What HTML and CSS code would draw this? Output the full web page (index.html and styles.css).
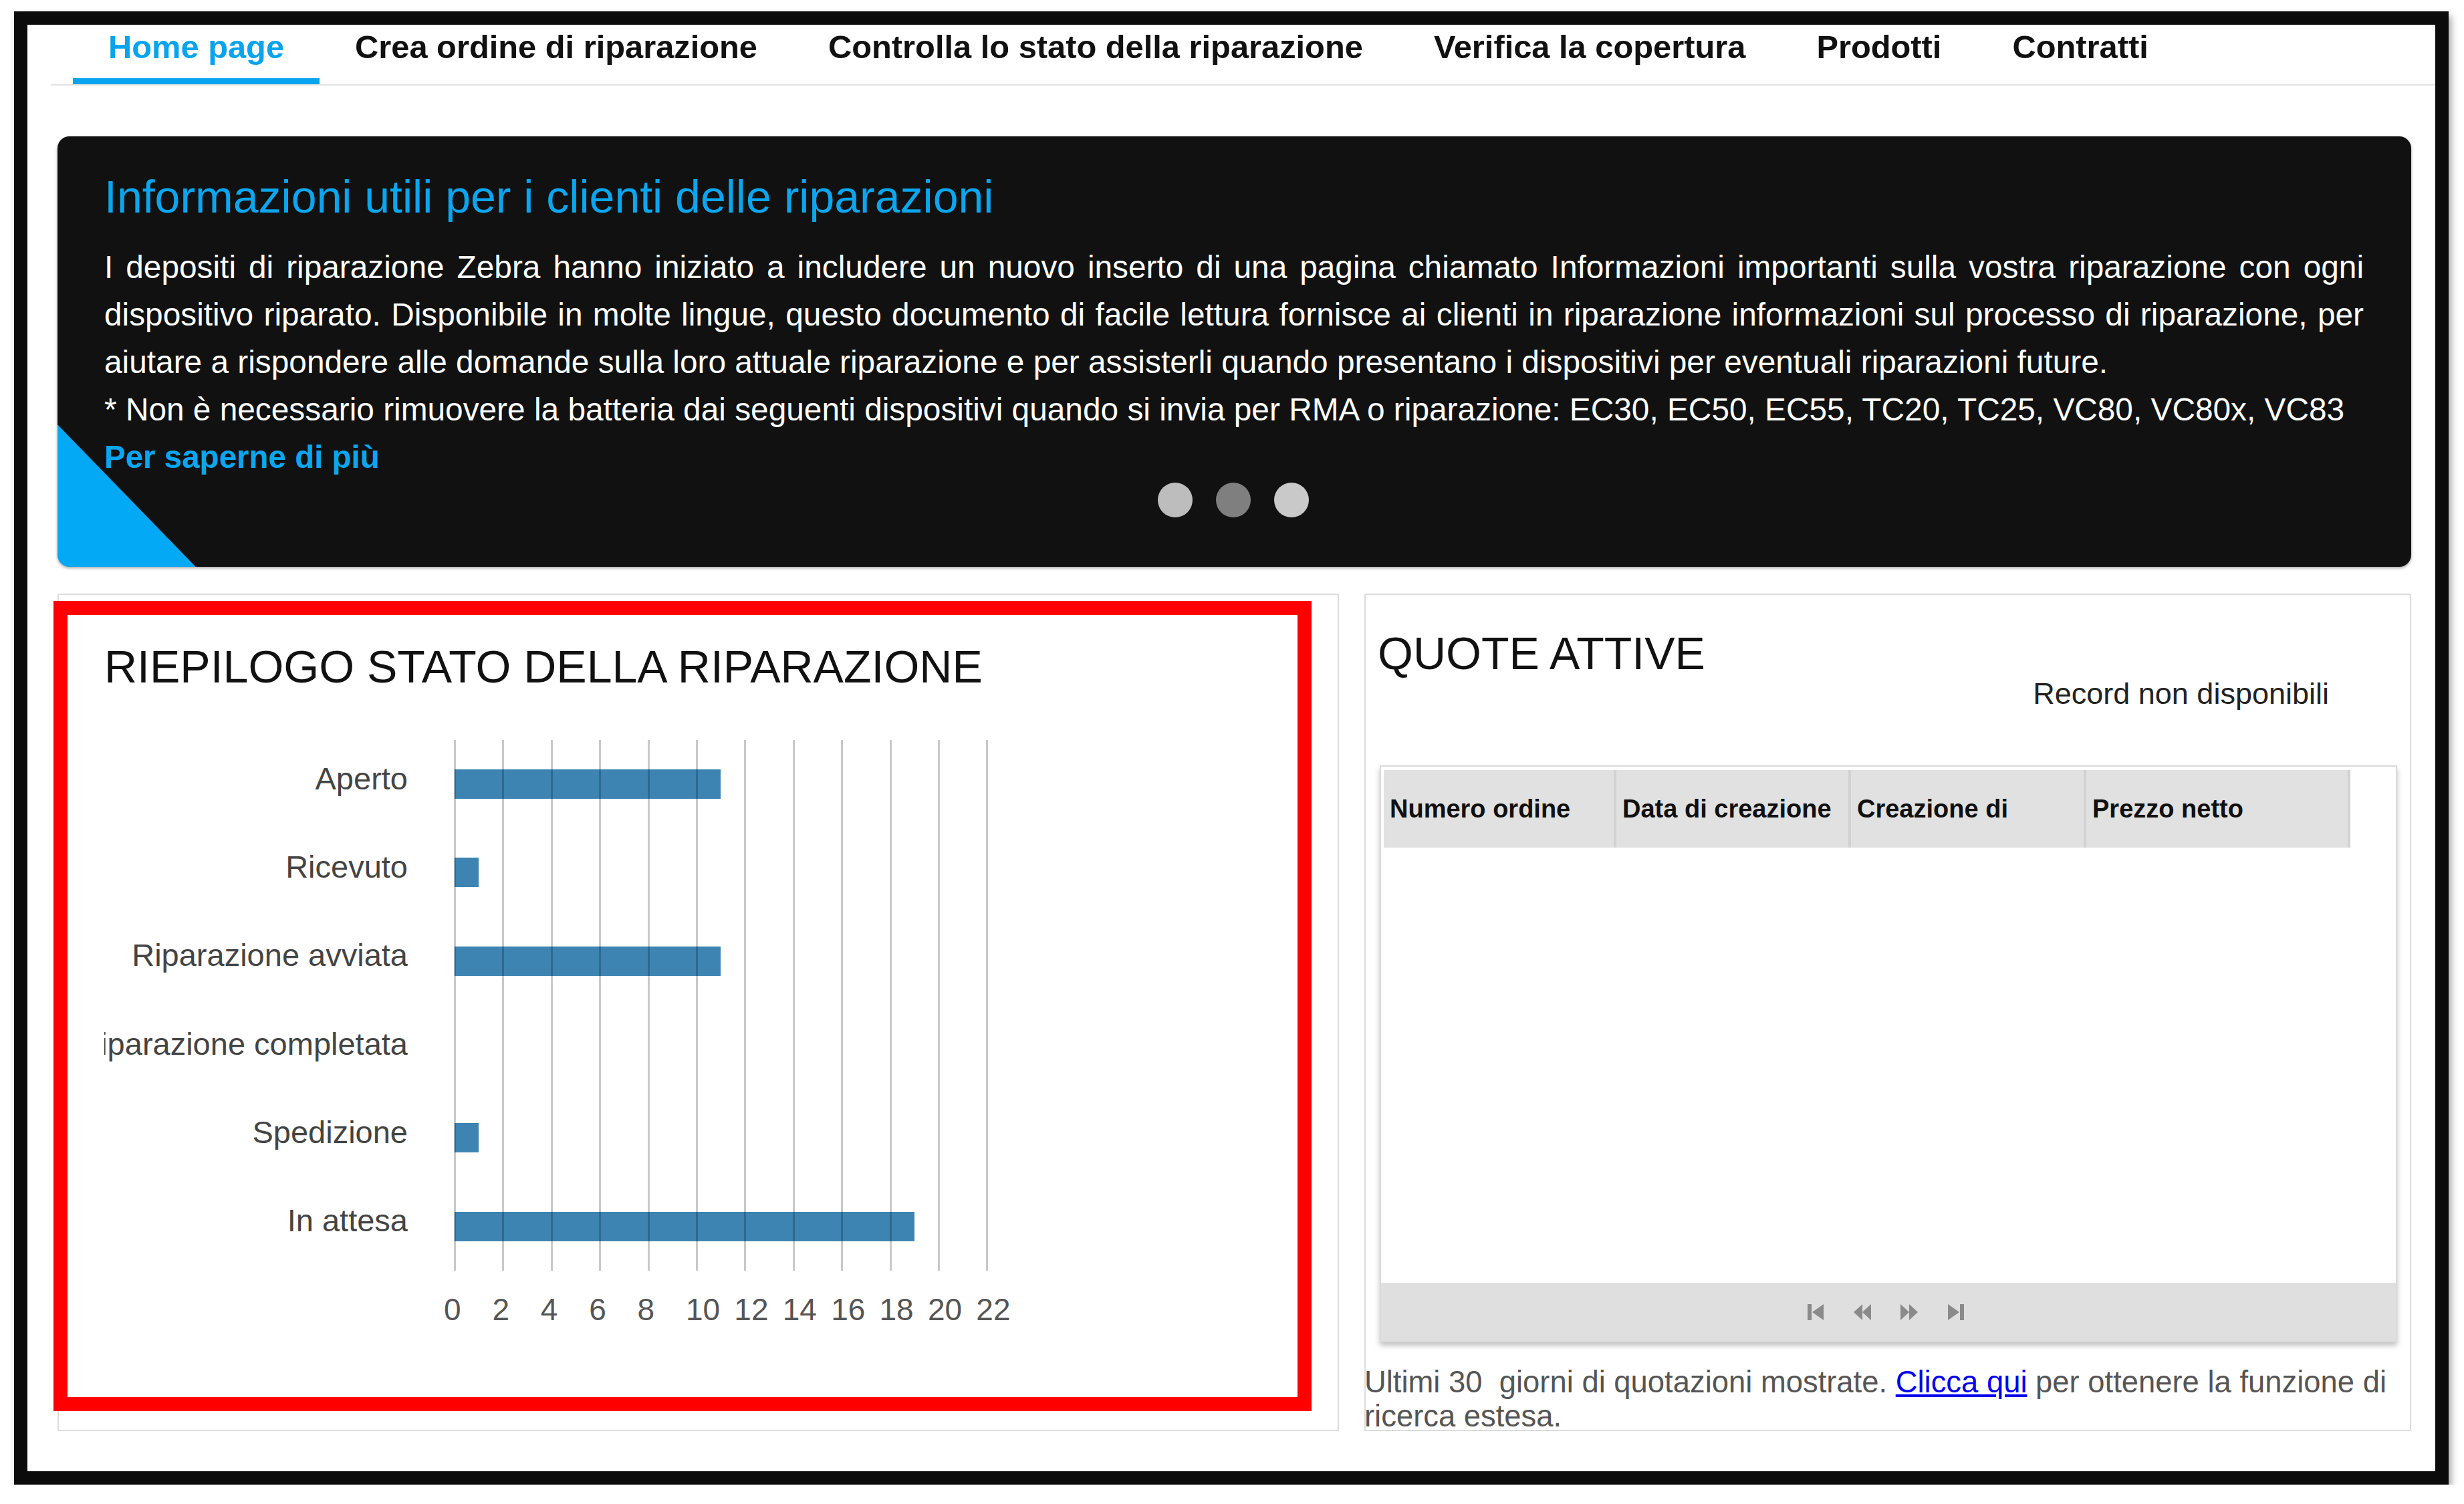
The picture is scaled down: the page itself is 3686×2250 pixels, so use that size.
FILE: index.html
```html
<!DOCTYPE html>
<html lang="it">
<head>
<meta charset="utf-8">
<title>Home page</title>
<link rel="stylesheet" href="styles.css">
</head>
<body>
<div class="frame">
  <nav class="tabs">
    <a class="tab active">Home page</a>
    <a class="tab">Crea ordine di riparazione</a>
    <a class="tab">Controlla lo stato della riparazione</a>
    <a class="tab">Verifica la copertura</a>
    <a class="tab">Prodotti</a>
    <a class="tab">Contratti</a>
  </nav>
  <main class="content">
    <section class="banner">
      <h1 class="banner-title">Informazioni utili per i clienti delle riparazioni</h1>
      <p class="banner-text justify">I depositi di riparazione Zebra hanno iniziato a includere un nuovo inserto di una pagina chiamato Informazioni importanti sulla vostra riparazione con ogni dispositivo riparato. Disponibile in molte lingue, questo documento di facile lettura fornisce ai clienti in riparazione informazioni sul processo di riparazione, per aiutare a rispondere alle domande sulla loro attuale riparazione e per assisterli quando presentano i dispositivi per eventuali riparazioni future.</p>
      <p class="banner-text">* Non è necessario rimuovere la batteria dai seguenti dispositivi quando si invia per RMA o riparazione: EC30, EC50, EC55, TC20, TC25, VC80, VC80x, VC83</p>
      <a class="banner-more">Per saperne di più</a>
      <div class="dots"><span class="dot d1"></span><span class="dot d2"></span><span class="dot d3"></span></div>
    </section>
    <div class="panels">
      <section class="panel summary">
        <h2 class="panel-title">RIEPILOGO STATO DELLA RIPARAZIONE</h2>
        <div class="chart">
          <div class="labels">
            <div class="label">Aperto</div>
            <div class="label">Ricevuto</div>
            <div class="label">Riparazione avviata</div>
            <div class="label">Riparazione completata</div>
            <div class="label">Spedizione</div>
            <div class="label">In attesa</div>
          </div>
          <div class="plot">
            <div class="row"><div class="bar" style="width:398.2px"></div></div>
            <div class="row"><div class="bar" style="width:36.2px"></div></div>
            <div class="row"><div class="bar" style="width:398.2px"></div></div>
            <div class="row"></div>
            <div class="row"><div class="bar" style="width:36.2px"></div></div>
            <div class="row"><div class="bar" style="width:687.8px"></div></div>
          </div>
          <div class="ticks">
            <span class="tick">0</span><span class="tick">2</span><span class="tick">4</span><span class="tick">6</span><span class="tick">8</span><span class="tick">10</span><span class="tick">12</span><span class="tick">14</span><span class="tick">16</span><span class="tick">18</span><span class="tick">20</span><span class="tick">22</span>
          </div>
        </div>
        <div class="highlight"></div>
      </section>
      <section class="panel quotes">
        <h2 class="panel-title">QUOTE ATTIVE</h2>
        <div class="record">Record non disponibili</div>
        <div class="grid">
          <div class="grid-head">
            <div class="th c1">Numero ordine</div>
            <div class="th c2">Data di creazione</div>
            <div class="th c3">Creazione di</div>
            <div class="th c4">Prezzo netto</div>
          </div>
          <div class="grid-body"></div>
          <div class="pager">
            <svg class="pg" viewBox="0 0 28 26"><rect x="2" y="1" width="6" height="24"/><polygon points="26,1 26,25 9,13"/></svg>
            <svg class="pg" viewBox="0 0 28 26"><polygon points="14,1 14,25 1,13"/><polygon points="27,1 27,25 14,13"/></svg>
            <svg class="pg" viewBox="0 0 28 26"><polygon points="1,1 1,25 14,13"/><polygon points="14,1 14,25 27,13"/></svg>
            <svg class="pg" viewBox="0 0 28 26"><polygon points="2,1 2,25 19,13"/><rect x="20" y="1" width="6" height="24"/></svg>
          </div>
        </div>
        <p class="note">Ultimi 30&nbsp; giorni di quotazioni mostrate. <a class="note-link">Clicca qui</a> per ottenere la funzione di ricerca estesa.</p>
      </section>
    </div>
  </main>
</div>
</body>
</html>
```

FILE: styles.css
```css
* { box-sizing: border-box; }

html, body {
  margin: 0;
  padding: 0;
  background: #ffffff;
  font-family: "Liberation Sans", Arial, sans-serif;
  color: #111111;
}

.frame {
  margin: 17px 0 0 21px;
  width: 3642px;
  height: 2204px;
  border: 20px solid #0b0b0b;
  background: #ffffff;
  box-shadow: 4px 7px 10px rgba(0, 0, 0, 0.35);
  overflow: hidden;
}

/* ---------- tabs ---------- */
.tabs {
  display: flex;
  margin-left: 35px;
  padding-left: 33px;
  border-bottom: 2px solid #e2e2e2;
}

.tab {
  display: block;
  padding: 3px 53px 17px;
  font-size: 48.8px;
  font-weight: bold;
  line-height: 60px;
  color: #111111;
  border-bottom: 9px solid transparent;
  white-space: nowrap;
}

.tab.active {
  color: #08a4ee;
  border-bottom-color: #08a4ee;
}

/* ---------- content ---------- */
.content {
  margin-top: 76px;
  padding: 0 36px 0 45px;
}

.banner {
  border-radius: 18px;
  background:
    linear-gradient(to top right, #04a9f5 50%, rgba(4, 169, 245, 0) 50.4%) left bottom / 206px 212px no-repeat,
    #101110;
  padding: 50px 71px 74px 70px;
  box-shadow: 0 2px 4px rgba(0, 0, 0, 0.35);
}

.banner-title {
  margin: 0 0 30px;
  font-size: 68px;
  font-weight: normal;
  line-height: 80px;
  color: #0aa6ef;
}

.banner-text {
  margin: 0;
  font-size: 47.8px;
  line-height: 71px;
  color: #ffffff;
}

.justify { text-align: justify; }

.banner-more {
  display: block;
  font-size: 47.5px;
  font-weight: bold;
  line-height: 71px;
  color: #0aa6ef;
}

.dots {
  display: flex;
  justify-content: center;
  gap: 35px;
  margin-top: 3px;
  padding-right: 2px;
}

.dot {
  width: 52px;
  height: 52px;
  border-radius: 50%;
}
.d1 { background: #bdbdbd; }
.d2 { background: #7f7f7f; }
.d3 { background: #c9c9c9; }

/* ---------- panels ---------- */
.panels {
  display: grid;
  grid-template-columns: 1917px 1fr;
  column-gap: 38px;
  margin-top: 40px;
}

.panel {
  border: 2px solid #dcdcdc;
  background: #ffffff;
}

.panel-title {
  margin: 0;
  font-size: 68px;
  font-weight: normal;
  line-height: 70px;
  color: #111111;
  white-space: nowrap;
}

/* summary chart */
.summary {
  position: relative;
  padding: 72px 0 153px 68px;
}

.chart {
  display: grid;
  grid-template-columns: 454px 799px;
  column-gap: 68.5px;
  margin-top: 75px;
}

.labels {
  display: flex;
  flex-direction: column;
  overflow: hidden;
}

.label {
  height: 132.33px;
  padding-bottom: 18px;
  display: flex;
  align-items: center;
  justify-content: flex-end;
  white-space: nowrap;
  font-size: 47px;
  color: #444444;
}

.plot {
  position: relative;
  height: 794px;
  display: flex;
  flex-direction: column;
}

.plot::after {
  content: "";
  position: absolute;
  inset: 0;
  background: repeating-linear-gradient(90deg, rgba(0, 0, 0, 0.21) 0 3px, rgba(0, 0, 0, 0) 3px 72.4px);
  pointer-events: none;
}

.row {
  height: 132.33px;
  display: flex;
  align-items: center;
}

.bar {
  height: 44px;
  margin-left: 1.5px;
  background: #3d84b3;
}

.ticks {
  grid-column: 2;
  display: flex;
  margin: 31px 0 0 -14.5px;
}

.tick {
  flex: 0 0 72.4px;
  text-align: left;
  font-size: 46px;
  line-height: 54px;
  color: #555555;
}

.highlight {
  position: absolute;
  left: -8px;
  top: 9px;
  width: 1882px;
  height: 1212px;
  border: 21px solid #ff0000;
  pointer-events: none;
}

/* quotes */
.quotes {
  padding: 52px 0 0;
}

.quotes .panel-title {
  padding-left: 18px;
}

.record {
  margin-top: -1px;
  padding-right: 121px;
  text-align: right;
  font-size: 45px;
  line-height: 54px;
  color: #222222;
}

.grid {
  margin: 80px 19px 0 21px;
  height: 863px;
  border: 2px solid #dadada;
  box-shadow: 0 5px 8px rgba(0, 0, 0, 0.25);
  display: flex;
  flex-direction: column;
  background: #ffffff;
}

.grid-head {
  display: flex;
  margin: 5px 0 0 4px;
  height: 116px;
}

.th {
  display: flex;
  align-items: center;
  padding-left: 9px;
  background: #e1e1e1;
  border-right: 4px solid #d2d2d2;
  font-size: 38px;
  font-weight: bold;
  color: #111111;
  white-space: nowrap;
}
.c1 { width: 348px; }
.c2 { width: 351px; }
.c3 { width: 352px; }
.c4 { width: 395px; }

.grid-body { flex: 1; }

.pager {
  height: 87px;
  background: #dfdfdf;
  display: flex;
  align-items: center;
  justify-content: center;
  gap: 42px;
  padding-right: 8px;
}

.pg {
  width: 28px;
  height: 26px;
  fill: #8a8a8a;
}

.note {
  margin: 34px 0 -6px -2px;
  font-size: 45.4px;
  line-height: 51px;
  color: #555555;
}

.note-link {
  color: #0000ee;
  text-decoration: underline;
}
```
